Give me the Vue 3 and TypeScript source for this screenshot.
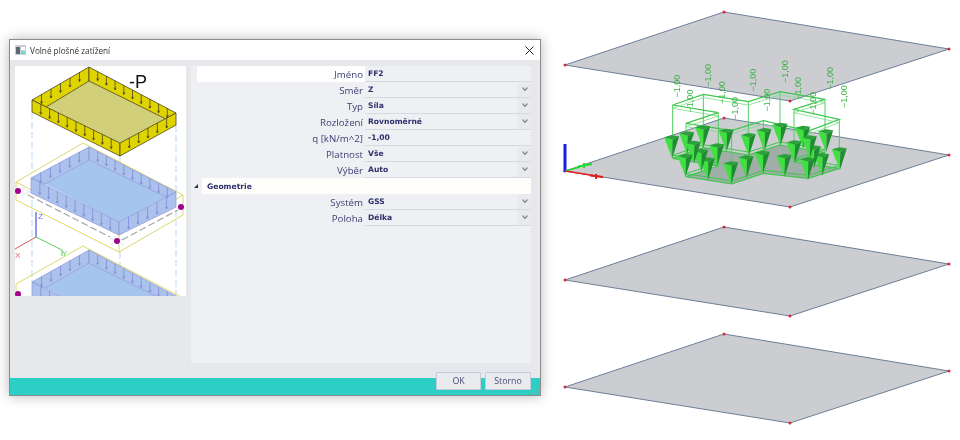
<script setup lang="ts">
type Pt = [number, number]

interface Row {
  label: string
  value: string
  select: boolean
}

const rowsTop: Row[] = [
  { label: 'Směr', value: 'Z', select: true },
  { label: 'Typ', value: 'Síla', select: true },
  { label: 'Rozložení', value: 'Rovnoměrné', select: true },
  { label: 'q [kN/m^2]', value: '-1,00', select: false },
  { label: 'Platnost', value: 'Vše', select: true },
  { label: 'Výběr', value: 'Auto', select: true },
]

const rowsGeo: Row[] = [
  { label: 'Systém', value: 'GSS', select: true },
  { label: 'Poloha', value: 'Délka', select: true },
]

// vertical load ticks along one wall of the sketch
function ticks(a: Pt, b: Pt, h: number, n: number, head = 1.1): string {
  let d = ''
  for (let i = 1; i < n; i++) {
    const x = a[0] + ((b[0] - a[0]) * i) / n
    const y = a[1] + ((b[1] - a[1]) * i) / n
    const end = y + h
    d += `M${x} ${y}V${end}M${x - head} ${end - head * 2}L${x} ${end}L${x + head} ${end - head * 2}`
  }
  return d
}

const yellowTicks = [
  ticks([32, 100], [120, 143], 10, 10),
  ticks([120, 143], [176, 113], 10, 6),
  ticks([32, 100], [89, 67], 9, 6),
  ticks([89, 67], [176, 113], 9, 10),
].join('')

const blueTicks = [
  ticks([31, 178], [119, 222], 12, 10),
  ticks([119, 222], [176, 192], 12, 6),
  ticks([31, 178], [89, 147], 10, 6),
  ticks([89, 147], [176, 192], 10, 10),
].join('')

const blueTicksLow = [
  ticks([32, 282], [120, 326], 12, 10),
  ticks([32, 282], [89, 250], 10, 6),
  ticks([89, 250], [176, 296], 10, 10),
].join('')

// right hand model view, coords are zoom crop based
const toPage = (x: number, y: number): Pt => [650 + x / 3, 60 + y / 3]

const plates = [12, 118, 227, 334].map((y) => {
  const pts: Pt[] = [
    [724, y],
    [949, y + 37],
    [790, y + 89],
    [565, y + 53],
  ]
  return { pts: pts.map((p) => p.join(',')).join(' '), corners: pts }
})

const topOutline: Pt[] = [
  [68, 135], [160, 103], [295, 125], [390, 95], [525, 118], [432, 148], [568, 178], [475, 213], [340, 182], [245, 212], [108, 190], [205, 158],
]
const bottomOutline: Pt[] = [
  [68, 295], [160, 263], [295, 285], [390, 255], [525, 278], [432, 305], [568, 325], [475, 355], [340, 340], [245, 372], [108, 350], [205, 318],
]
const asPoints = (list: Pt[], dy = 0) => list.map(([x, y]) => toPage(x, y + dy).join(',')).join(' ')
const topPts = asPoints(topOutline)
const topPts2 = asPoints(topOutline, 10)
const bottomPts = asPoints(bottomOutline)
const bottomPts2 = asPoints(bottomOutline, -9)
const posts = topOutline.map((p, i) => {
  const [x1, y1] = toPage(p[0], p[1])
  const [x2, y2] = toPage(bottomOutline[i][0], bottomOutline[i][1])
  return { x1, y1, x2, y2 }
})

const cones = (
  [
    [65, 232], [110, 220], [158, 202], [228, 212], [295, 225], [342, 210], [390, 194], [458, 203], [527, 214],
    [568, 268], [515, 285], [490, 262], [478, 232], [432, 247], [472, 298], [402, 288], [337, 278], [288, 292],
    [242, 310], [200, 256], [172, 298], [152, 272], [130, 248], [105, 287],
  ] as Pt[]
).map(([zx, zy]) => {
  const [x, y] = toPage(zx, zy)
  return {
    left: `${x - 7.5},${y} ${x + 1},${y + 2.5} ${x + 0.5},${y + 21}`,
    right: `${x + 7.5},${y - 1} ${x + 1},${y + 2.5} ${x + 0.5},${y + 21}`,
    top: `${x - 7.5},${y} ${x},${y - 2} ${x + 7.5},${y - 1} ${x + 1},${y + 2.5}`,
  }
})

const loadLabels = (
  [
    [80, 78], [175, 46], [120, 123], [215, 98], [255, 145], [310, 60], [350, 120], [405, 35], [445, 85], [488, 130], [540, 55], [582, 110],
  ] as Pt[]
).map(([zx, zy]) => {
  const [x0, y] = toPage(zx, zy)
  const x = x0 + 3
  return { x, y, transform: `rotate(-90 ${x} ${y})` }
})
</script>

<template>
  <div class="page">
    <section class="dialog">
      <header class="titlebar">
        <svg class="app-icon" width="11" height="10" viewBox="0 0 11 10">
          <rect width="11" height="10" fill="#c9ced4" />
          <rect x="1" y="2" width="4" height="7" fill="#5c6a76" />
          <rect x="6" y="2" width="4" height="3" fill="#ffffff" />
          <rect x="6" y="6" width="4" height="3" fill="#6fd8cf" />
        </svg>
        <span class="title">Volné plošné zatížení</span>
        <svg class="close" width="9" height="9" viewBox="0 0 9 9">
          <path d="M0.5 0.5L8.500 8.500M8.500 0.5L0.5 8.500" stroke="#222" stroke-width="1" fill="none" />
        </svg>
      </header>

      <div class="body">
        <div class="sketch">
          <svg width="171" height="230" viewBox="15 66 171 230">
            <g stroke="#b9d4f2" stroke-width="1" stroke-dasharray="7 3" fill="none">
              <path d="M32 112V178M176 125V192M120 156V222M32 200V282M176 210V296M120 252V296" />
            </g>

            <!-- top frame, yellow -->
            <polygon points="89,81 166,119 120,143 46,107" fill="#d2cf7a" />
            <polygon points="32,100 89,67 89,81 46,107" fill="#e0d400" stroke="#4a4420" stroke-width="0.8" />
            <polygon points="89,67 176,113 166,119 89,81" fill="#e0d400" stroke="#4a4420" stroke-width="0.8" />
            <polygon points="32,100 120,143 120,156 32,112" fill="#e0d400" stroke="#4a4420" stroke-width="0.8" />
            <polygon points="120,143 176,113 176,125 120,156" fill="#e0d400" stroke="#4a4420" stroke-width="0.8" />
            <path :d="yellowTicks" stroke="#3a3420" stroke-width="0.7" fill="none" />
            <text x="129" y="88" class="minus-p">-P</text>

            <!-- middle plate with blue box -->
            <polygon points="83,143 183,195 119,241 16,182" fill="#fff" />
            <path d="M16 182L83 143L183 195V215L119 252L16 200ZM16 182L119 235L183 195M119 235V252" fill="none" stroke="#dcd870" stroke-width="1" />
            <path d="M28 195L110 237M122 240L178 210" stroke="#a5a5a5" stroke-width="1.200" stroke-dasharray="7 3" fill="none" />
            <path d="M21 196L30 191M22 187L31 193M111 244L124 238M110 238L124 245" stroke="#cfe0f6" stroke-width="0.8" fill="none" />
            <polygon points="89,160 166,197 119,222 45,184" fill="#a5c4ee" />
            <polygon points="31,178 89,147 89,160 45,184" fill="#aac2ec" stroke="#8d93d8" stroke-width="0.7" />
            <polygon points="89,147 176,192 166,197 89,160" fill="#aac2ec" stroke="#8d93d8" stroke-width="0.7" />
            <polygon points="31,178 119,222 119,235 31,193" fill="#aac2ec" stroke="#8d93d8" stroke-width="0.7" />
            <polygon points="119,222 176,192 176,207 119,235" fill="#aac2ec" stroke="#8d93d8" stroke-width="0.7" />
            <path :d="blueTicks" stroke="#8389d8" stroke-width="0.8" fill="none" />
            <circle cx="18" cy="191" r="3" fill="#a3008f" />
            <circle cx="117" cy="241" r="3" fill="#a3008f" />
            <circle cx="181" cy="207" r="3" fill="#a3008f" />

            <!-- axes -->
            <path d="M36 237V212" stroke="#2b2be8" stroke-width="1" />
            <path d="M36 237L15 249" stroke="#d65a5a" stroke-width="1" />
            <path d="M36 237L62 250M62 250V256" stroke="#58d05c" stroke-width="1" />
            <text x="38" y="219" class="axis" fill="#6a70e0">Z</text>
            <text x="15" y="258" class="axis" fill="#d86a6a">X</text>
            <text x="62" y="256" class="axis" fill="#58c85c">Y</text>

            <!-- lower plate, cut by the frame -->
            <path d="M16 300V284L83 246L183 298" fill="none" stroke="#dcd870" stroke-width="1" />
            <polygon points="89,263 166,301 119,325 45,288" fill="#a5c4ee" />
            <polygon points="32,282 89,250 89,263 45,288" fill="#aac2ec" stroke="#8d93d8" stroke-width="0.7" />
            <polygon points="89,250 176,296 166,301 89,263" fill="#aac2ec" stroke="#8d93d8" stroke-width="0.7" />
            <polygon points="32,282 120,326 120,340 32,297" fill="#aac2ec" stroke="#8d93d8" stroke-width="0.7" />
            <path :d="blueTicksLow" stroke="#8389d8" stroke-width="0.8" fill="none" />
            <circle cx="18" cy="294" r="3" fill="#a3008f" />
          </svg>
        </div>

        <div class="form">
          <div class="row">
            <span class="label label-active">Jméno</span>
            <span class="value">FF2</span>
          </div>
          <div v-for="row in rowsTop" :key="row.label" class="row">
            <span class="label">{{ row.label }}</span>
            <span class="value">{{ row.value }}</span>
            <span v-if="row.select" class="chevron">
              <svg width="6" height="4" viewBox="0 0 6 4"><path d="M0.5 0.5L3 3.500L5.500 0.5" fill="none" stroke="#87919e" stroke-width="1.400" /></svg>
            </span>
          </div>
          <div class="group">
            <span class="caret"></span>
            <span class="group-title">Geometrie</span>
          </div>
          <div v-for="row in rowsGeo" :key="row.label" class="row">
            <span class="label">{{ row.label }}</span>
            <span class="value">{{ row.value }}</span>
            <span v-if="row.select" class="chevron">
              <svg width="6" height="4" viewBox="0 0 6 4"><path d="M0.5 0.5L3 3.500L5.500 0.5" fill="none" stroke="#87919e" stroke-width="1.400" /></svg>
            </span>
          </div>
        </div>
      </div>

      <footer class="footer">
        <button class="btn btn-ok" type="button">OK</button>
        <button class="btn btn-cancel" type="button">Storno</button>
        <svg class="grip" width="7" height="7" viewBox="0 0 7 7">
          <path d="M5 0h1.500v1.500H5zM2.500 2.500H4V4H2.500zM5 2.500h1.500V4H5zM0 5h1.500v1.500H0zM2.500 5H4v1.500H2.500zM5 5h1.500v1.500H5z" fill="#8fa3a8" />
        </svg>
      </footer>
    </section>

    <svg class="model" width="419" height="440" viewBox="541 0 419 440">
      <g v-for="(plate, i) in plates" :key="i">
        <polygon :points="plate.pts" fill="#cbcdd0" stroke="#6c7f98" stroke-width="1" />
        <circle v-for="(c, j) in plate.corners" :key="j" :cx="c[0]" :cy="c[1]" r="1.500" fill="#d8283a" />
      </g>

      <!-- local axes -->
      <path d="M565 144V172" stroke="#1c1ce0" stroke-width="3" />
      <path d="M565 171L580 167" stroke="#1fdc2a" stroke-width="1.500" fill="none" />
      <path d="M578 166.500L592 164M584 163V168" stroke="#1fdc2a" stroke-width="2" fill="none" />
      <path d="M565 171L603 177" stroke="#e02020" stroke-width="1.500" fill="none" />
      <path d="M590 175.500L603 177M596 174V179" stroke="#e02020" stroke-width="2" fill="none" />

      <!-- load outline -->
      <polygon :points="bottomPts" fill="#3d6a48" fill-opacity="0.3" stroke="#3cc84c" stroke-width="1.200" />
      <polygon :points="bottomPts2" fill="none" stroke="#3cc84c" stroke-width="1" />
      <line v-for="(p, i) in posts" :key="i" :x1="p.x1" :y1="p.y1" :x2="p.x2" :y2="p.y2" stroke="#52cc62" stroke-width="1" />
      <polygon :points="topPts" fill="none" stroke="#3cc84c" stroke-width="1.200" />
      <polygon :points="topPts2" fill="none" stroke="#7bdc88" stroke-width="0.8" />

      <g v-for="(c, i) in cones" :key="i">
        <polygon :points="c.left" fill="#3fe040" />
        <polygon :points="c.right" fill="#1e8c30" />
        <polygon :points="c.top" fill="#2aa038" />
      </g>

      <text
        v-for="(l, i) in loadLabels"
        :key="i"
        :x="l.x"
        :y="l.y"
        :transform="l.transform"
        class="load-label"
        text-anchor="middle"
      >−1,00</text>
    </svg>
  </div>
</template>

<style scoped>
.page {
  position: relative;
  display: flex;
  align-items: flex-start;
  width: 960px;
  height: 440px;
  background: #ffffff;
  overflow: hidden;
  font-family: "Open Sans", "Noto Sans", sans-serif;
  filter: blur(0.3px);
}

.dialog {
  display: flex;
  flex-direction: column;
  box-sizing: border-box;
  width: 532px;
  height: 357px;
  margin: 39px 0 0 9px;
  background: #e6e8ec;
  border: 1px solid #8c8c8c;
  box-shadow: 0 0 12px rgba(0, 0, 0, 0.28);
}

.titlebar {
  display: flex;
  align-items: center;
  flex: none;
  height: 20px;
  padding: 0 6px 0 5px;
  background: #ffffff;
}

.app-icon {
  margin-right: 4px;
}

.title {
  flex: 1;
  font-size: 8.200px;
  color: #333;
}

.body {
  display: flex;
  flex: 1;
  gap: 5px;
  padding: 6px 9px 15px 5px;
  min-height: 0;
}

.sketch {
  flex: none;
  width: 171px;
  height: 230px;
  background: #ffffff;
  overflow: hidden;
}

.sketch svg {
  display: block;
}

.minus-p {
  font-family: "Liberation Sans", sans-serif;
  font-size: 18px;
  fill: #111;
}

.axis {
  font-family: "Liberation Sans", sans-serif;
  font-size: 8px;
}

.form {
  flex: 1;
  position: relative;
  padding-left: 6px;
  background: #eef0f3;
}

.row {
  display: flex;
  height: 16px;
  align-items: stretch;
}

.label {
  flex: none;
  box-sizing: border-box;
  width: 168px;
  padding-right: 2px;
  font-size: 9.700px;
  line-height: 17px;
  text-align: right;
  color: #3e3e74;
}

.label-active {
  background: #ffffff;
}

.value {
  flex: 1;
  padding-left: 3px;
  font-family: "DejaVu Sans", sans-serif;
  font-size: 7.600px;
  font-weight: 700;
  line-height: 15px;
  color: #2f2f6b;
  border-bottom: 1px solid #d6d9df;
}

.chevron {
  display: flex;
  flex: none;
  align-items: center;
  justify-content: center;
  width: 13px;
  margin-left: -13px;
  padding-bottom: 2px;
  box-sizing: border-box;
  background: #e8eaed;
  border-bottom: 1px solid #d6d9df;
}

.group {
  display: flex;
  align-items: center;
  height: 16px;
  margin-left: 5px;
  background: #fffefb;
}

.group-title {
  padding-left: 5px;
  font-family: "DejaVu Sans", sans-serif;
  font-size: 7.600px;
  font-weight: 700;
  color: #2f2f6b;
}

.caret {
  position: absolute;
  left: 3px;
  top: 118px;
  width: 0;
  height: 0;
  border-style: solid;
  border-width: 0 0 4px 4px;
  border-color: transparent transparent #26305f transparent;
}

.footer {
  display: flex;
  flex: none;
  justify-content: flex-end;
  gap: 4px;
  position: relative;
  height: 17px;
  padding-right: 9px;
  background: #2bcfc3;
}

.btn {
  height: 18px;
  margin-top: -6px;
  padding: 0;
  font-family: "Open Sans", "Noto Sans", sans-serif;
  font-size: 8.800px;
  font-weight: 500;
  color: #4a4a78;
  background: #e9ebef;
  border: 1px solid #c8cad8;
  border-radius: 1px;
}

.btn-ok {
  width: 45px;
}

.btn-cancel {
  width: 46px;
}

.grip {
  position: absolute;
  right: 1px;
  bottom: 1px;
}

.model {
  position: absolute;
  left: 541px;
  top: 0;
}

.load-label {
  font-family: "Liberation Sans", sans-serif;
  font-size: 9px;
  fill: #3fb04a;
}
</style>

<style>
html,
body {
  margin: 0;
  background: #fff;
}
</style>
